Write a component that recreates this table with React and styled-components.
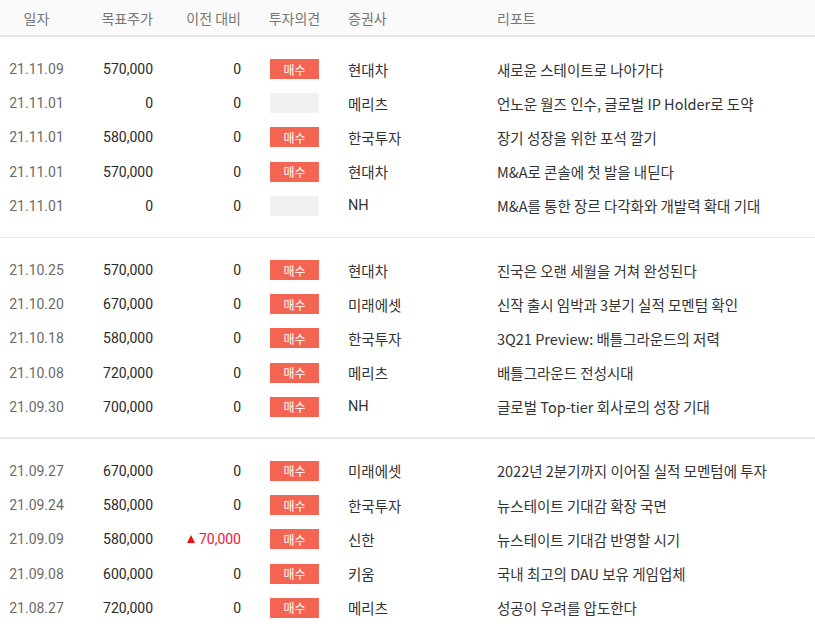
import React from "react";
import styled, { createGlobalStyle } from "styled-components";

const GlobalStyle = createGlobalStyle`
  body {
    margin: 0;
    background: #fff;
    font-family: Roboto, "Noto Sans CJK KR", sans-serif;
  }
`;

const COLS = "73px 80px 88px 107px 149px 1fr";

const Table = styled.div`
  width: 815px;
`;

const Head = styled.div`
  display: grid;
  grid-template-columns: ${COLS};
  height: 35px;
  align-items: center;
  background: #fafafa;
  border-bottom: 2px solid #e6e6ea;
  color: #777;
  font-family: "Noto Sans CJK KR", sans-serif;
  font-size: 14px;
`;

const HeadCell = styled.div`
  text-align: ${(p) => p.$align || "left"};
`;

const Group = styled.div`
  padding: 15px 0 ${(p) => (p.$thick ? "13px" : "14px")};
  border-bottom: ${(p) => (p.$thick ? "2px" : "1px")} solid #e6e6ea;

  &:last-child {
    border-bottom: none;
  }
`;

const Row = styled.div`
  display: grid;
  grid-template-columns: ${COLS};
  height: 34.2px;
  align-items: center;
  font-size: 14px;
  color: #2a2a2a;
`;

const DateCell = styled.div`
  text-align: center;
  color: #6b6b6b;
`;

const Num = styled.div`
  text-align: right;
  color: ${(p) => (p.$up ? "#f2163a" : "#2a2a2a")};
`;

const Up = styled.span`
  display: inline-block;
  width: 0;
  height: 0;
  border-left: 4.5px solid transparent;
  border-right: 4.5px solid transparent;
  border-bottom: 8px solid #f20f0f;
  margin-right: 4px;
  vertical-align: 1px;
`;

const OpinionCell = styled.div`
  display: flex;
  justify-content: center;
`;

const Badge = styled.span`
  width: 49px;
  height: 20px;
  display: flex;
  align-items: center;
  justify-content: center;
  background: ${(p) => (p.$empty ? "#f1f1f1" : "#f36453")};
  color: #fff;
  font-family: "Noto Sans CJK KR", sans-serif;
  font-size: 12px;
`;

const Broker = styled.div`
  color: #333;
  font-family: Roboto, "Noto Sans CJK KR", sans-serif;
  font-size: 14.5px;
`;

const Report = styled.div`
  color: #333;
  font-family: "Noto Sans CJK KR", sans-serif;
  font-size: 14.5px;
  white-space: nowrap;
`;

const groups = [
  [
    ["21.11.09", "570,000", "0", "매수", "현대차", "새로운 스테이트로 나아가다"],
    ["21.11.01", "0", "0", "", "메리츠", "언노운 월즈 인수, 글로벌 IP Holder로 도약"],
    ["21.11.01", "580,000", "0", "매수", "한국투자", "장기 성장을 위한 포석 깔기"],
    ["21.11.01", "570,000", "0", "매수", "현대차", "M&A로 콘솔에 첫 발을 내딛다"],
    ["21.11.01", "0", "0", "", "NH", "M&A를 통한 장르 다각화와 개발력 확대 기대"],
  ],
  [
    ["21.10.25", "570,000", "0", "매수", "현대차", "진국은 오랜 세월을 거쳐 완성된다"],
    ["21.10.20", "670,000", "0", "매수", "미래에셋", "신작 출시 임박과 3분기 실적 모멘텀 확인"],
    ["21.10.18", "580,000", "0", "매수", "한국투자", "3Q21 Preview: 배틀그라운드의 저력"],
    ["21.10.08", "720,000", "0", "매수", "메리츠", "배틀그라운드 전성시대"],
    ["21.09.30", "700,000", "0", "매수", "NH", "글로벌 Top-tier 회사로의 성장 기대"],
  ],
  [
    ["21.09.27", "670,000", "0", "매수", "미래에셋", "2022년 2분기까지 이어질 실적 모멘텀에 투자"],
    ["21.09.24", "580,000", "0", "매수", "한국투자", "뉴스테이트 기대감 확장 국면"],
    ["21.09.09", "580,000", "▲70,000", "매수", "신한", "뉴스테이트 기대감 반영할 시기"],
    ["21.09.08", "600,000", "0", "매수", "키움", "국내 최고의 DAU 보유 게임업체"],
    ["21.08.27", "720,000", "0", "매수", "메리츠", "성공이 우려를 압도한다"],
  ],
];

export default function App() {
  return (
    <>
      <GlobalStyle />
      <Table>
        <Head>
          <HeadCell $align="center">일자</HeadCell>
          <HeadCell $align="right">목표주가</HeadCell>
          <HeadCell $align="right">이전 대비</HeadCell>
          <HeadCell $align="center">투자의견</HeadCell>
          <HeadCell>증권사</HeadCell>
          <HeadCell>리포트</HeadCell>
        </Head>
        {groups.map((rows, gi) => (
          <Group key={gi} $thick={gi === 1}>
            {rows.map(([date, price, diff, opinion, broker, title], i) => {
              const up = diff.startsWith("▲");
              return (
                <Row key={i}>
                  <DateCell>{date}</DateCell>
                  <Num>{price}</Num>
                  <Num $up={up}>
                    {up && <Up />}
                    {up ? diff.slice(1) : diff}
                  </Num>
                  <OpinionCell>
                    <Badge $empty={!opinion}>{opinion}</Badge>
                  </OpinionCell>
                  <Broker>{broker}</Broker>
                  <Report>{title}</Report>
                </Row>
              );
            })}
          </Group>
        ))}
      </Table>
    </>
  );
}
